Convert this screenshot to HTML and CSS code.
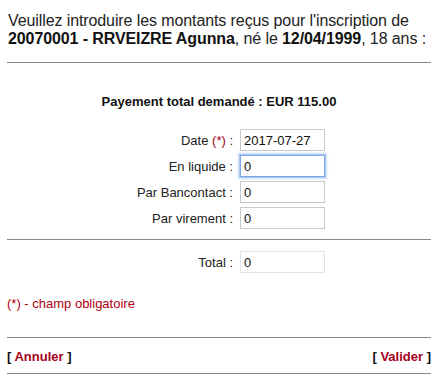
FILE: index.html
```html
<!DOCTYPE html>
<html>
<head>
  <meta charset="utf-8">
  <title>Inscription - paiement</title>
  <link rel="stylesheet" href="styles.css">
</head>
<body>

  <div class="page">

    <p class="intro">
      Veuillez introduire les montants reçus pour l'inscription de<br>
      <b>20070001 - RRVEIZRE Agunna</b>, né le <b>12/04/1999</b>, 18 ans :
    </p>

    <div class="rule"></div>

    <h3 class="total-due">Payement total demandé : EUR 115.00</h3>

    <form class="amounts">
      <label for="date">Date <span class="req">(*)</span> :</label>
      <input type="text" id="date" value="2017-07-27">

      <label for="cash">En liquide :</label>
      <input type="text" id="cash" class="focused" value="0">

      <label for="card">Par Bancontact :</label>
      <input type="text" id="card" value="0">

      <label for="transfer">Par virement :</label>
      <input type="text" id="transfer" value="0">
    </form>

    <div class="rule rule-mid"></div>

    <div class="amounts total-row">
      <label for="total">Total :</label>
      <input type="text" id="total" class="readonly" value="0" readonly>
    </div>

    <p class="note">(*) - champ obligatoire</p>

    <div class="rule"></div>

    <div class="actions">
      <span class="action">[ <a href="#">Annuler</a> ]</span>
      <span class="action">[ <a href="#">Valider</a> ]</span>
    </div>

    <div class="rule rule-end"></div>

  </div>

</body>
</html>
```

FILE: styles.css
```css
body{
    margin: 0;
    font-family: "Liberation Sans", Arial, sans-serif;
    color: #222;
    background: #fff;
}

.page{
    width: 424px;
    margin-left: 7px;
}

.intro{
    margin: 12px 0 14px 1px;
    font-size: 16px;
    line-height: 18px;
    white-space: nowrap;
    letter-spacing: -0.1px;
}

.intro b{
    color: #111;
}

.rule{
    height: 1px;
    background: #8a8a8a;
}

.total-due{
    margin: 31px 0 19px 0;
    font-size: 13px;
    line-height: 16px;
    text-align: center;
    color: #111;
}

.amounts{
    display: grid;
    grid-template-columns: 226px 85px;
    column-gap: 7px;
    row-gap: 4px;
    align-items: center;
    margin: 0;
}

.amounts label{
    text-align: right;
    font-size: 13px;
    color: #222;
}

.amounts input{
    box-sizing: border-box;
    width: 85px;
    height: 22px;
    margin: 0;
    padding: 0 3px;
    border: 1px solid #c9c9c9;
    font-family: "Liberation Sans", Arial, sans-serif;
    font-size: 13px;
    color: #111;
    outline: none;
}

.amounts input.focused{
    border-color: #7ea9e6;
    box-shadow: 0 0 0 1px #a9c8f3, 0 0 2px 2px #cfe0f8;
}

.amounts input.readonly{
    border-color: #e3e3e3;
}

.req{
    color: #a3001b;
}

.rule-mid{
    margin: 10px 0 11px 0;
}

.note{
    margin: 23px 0 26px 0;
    font-size: 13px;
    line-height: 15px;
    color: #b0000f;
}

.actions{
    display: flex;
    justify-content: space-between;
    margin: 11px 0 9px 0;
    font-size: 13px;
    line-height: 15px;
    font-weight: bold;
    color: #111;
}

.action a{
    color: #a8001c;
    text-decoration: none;
}
```
